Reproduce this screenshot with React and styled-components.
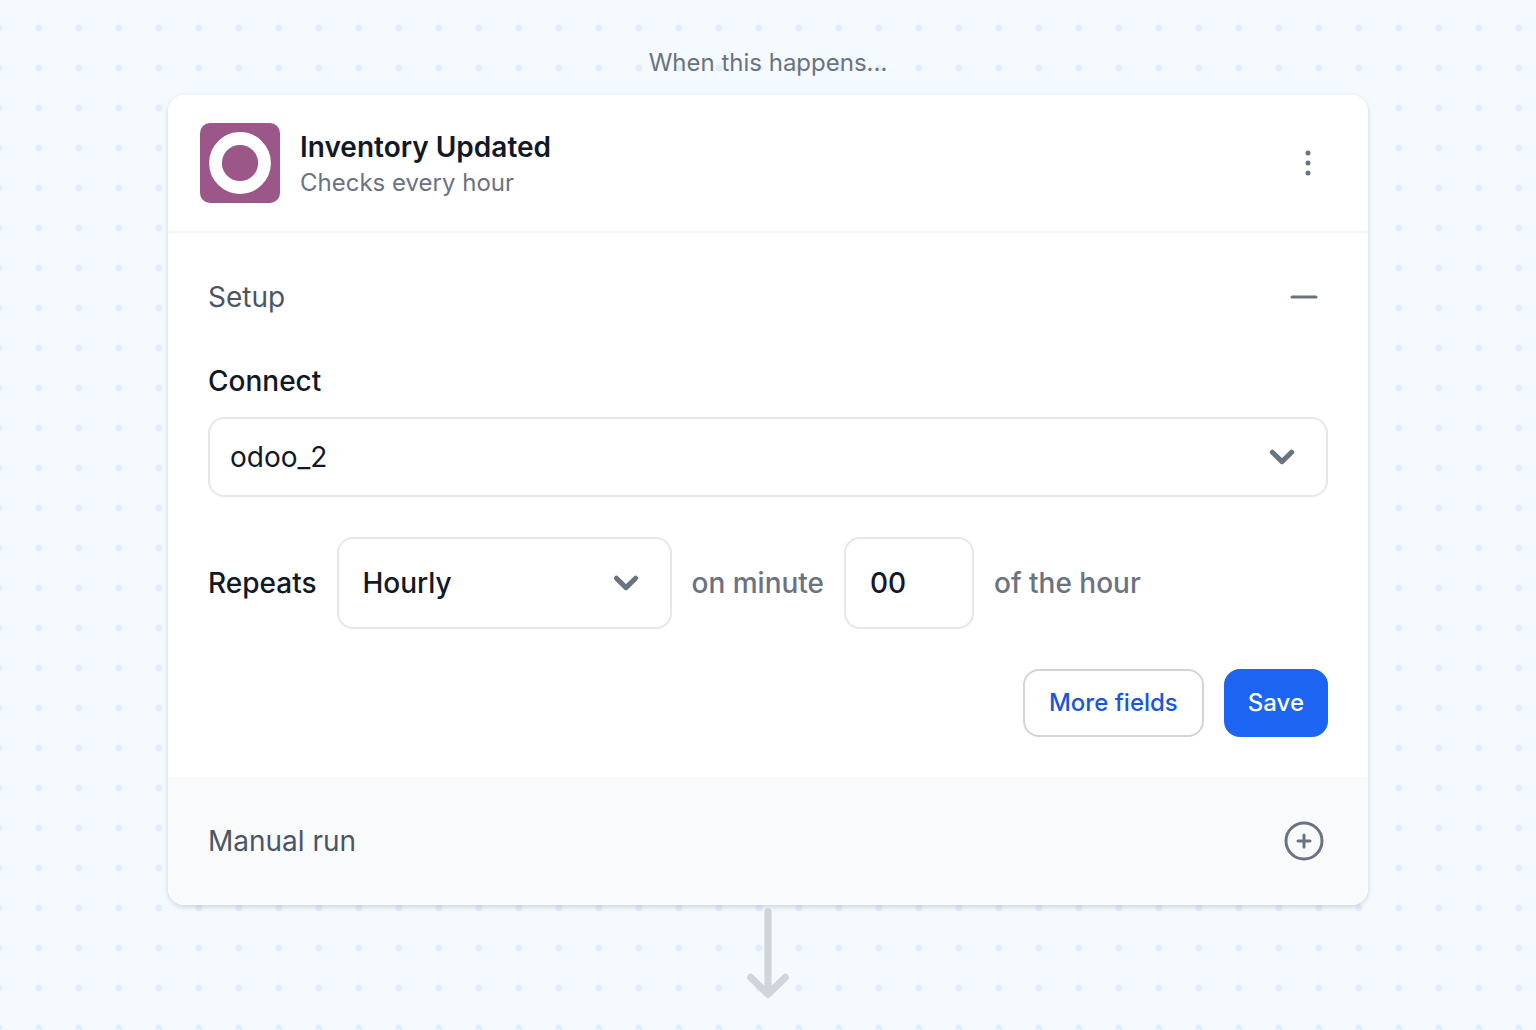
import { useState } from 'react';
import styled, { createGlobalStyle } from 'styled-components';

const GlobalStyle = createGlobalStyle`
  *, *::before, *::after {
    box-sizing: border-box;
  }

  body {
    margin: 0;
    font-family: Inter, 'Liberation Sans', sans-serif;
    font-size: 28px;
    line-height: 40px;
    color: #111827;
    background-color: #f5faff;
    background-image: radial-gradient(circle, #e0eefe 3px, transparent 4px);
    background-size: 40px 40px;
    background-position: 19px 8px;
  }

  button, input, select {
    margin: 0;
    font: inherit;
    color: inherit;
  }
`;

const Canvas = styled.main`
  display: flex;
  flex-direction: column;
  align-items: center;
  padding: 47px 32px 32px;
`;

const Caption = styled.p`
  margin: 0 0 16px;
  font-size: 24px;
  line-height: 32px;
  color: #6b7280;
`;

const Card = styled.section`
  width: 100%;
  max-width: 1200px;
  overflow: hidden;
  border-radius: 16px;
  background: #fff;
  box-shadow: 0 2px 6px rgba(0, 0, 0, 0.1), 0 2px 4px rgba(0, 0, 0, 0.06);
`;

const CardHeader = styled.header`
  display: flex;
  align-items: center;
  gap: 20px;
  padding: 28px 32px;
  border-bottom: 2px solid #f3f4f6;
`;

const Titles = styled.div`
  flex: 1;
`;

const Title = styled.h1`
  margin: 0;
  font-size: 28px;
  font-weight: 600;
  line-height: 40px;
`;

const Subtitle = styled.p`
  margin: 0;
  font-size: 24px;
  line-height: 32px;
  color: #6b7280;
`;

const MenuButton = styled.button`
  display: grid;
  place-items: center;
  width: 56px;
  height: 56px;
  padding: 0;
  border: 0;
  background: none;
  color: #6b7280;
  cursor: pointer;
`;

const SectionToggle = styled.button`
  display: flex;
  align-items: center;
  justify-content: space-between;
  width: 100%;
  height: 128px;
  padding: 0 40px;
  border: 0;
  background: ${({ $muted }) => ($muted ? '#f9fafb' : '#fff')};
  color: #4b5563;
  text-align: left;
  cursor: pointer;

  svg {
    color: #6b7280;
  }
`;

const Form = styled.form`
  display: flex;
  flex-direction: column;
  gap: 40px;
  padding: 0 40px 40px;
`;

const Field = styled.div`
  display: flex;
  flex-direction: column;
  gap: 16px;
`;

const Label = styled.label`
  font-weight: 500;
  color: ${({ $muted }) => ($muted ? '#6b7280' : '#111827')};
`;

const Row = styled.div`
  display: flex;
  flex-wrap: wrap;
  align-items: center;
  gap: 20px;
`;

const SelectBox = styled.div`
  display: grid;
  align-items: center;
  width: ${({ $width }) => $width || '100%'};

  select, svg {
    grid-area: 1 / 1;
  }

  svg {
    justify-self: end;
    margin-right: 32px;
    color: #6b7280;
    pointer-events: none;
  }
`;

const Select = styled.select`
  width: 100%;
  height: ${({ $large }) => ($large ? '92px' : '80px')};
  padding: 0 ${({ $large }) => ($large ? '24px' : '20px')};
  border: 2px solid #e5e7eb;
  border-radius: 16px;
  appearance: none;
  background: #fff;
  font-weight: ${({ $large }) => ($large ? 500 : 400)};
`;

const MinuteInput = styled.input`
  width: 130px;
  height: 92px;
  padding: 0 24px;
  border: 2px solid #e5e7eb;
  border-radius: 16px;
  background: #fff;
  font-weight: 500;
`;

const Actions = styled.div`
  display: flex;
  justify-content: flex-end;
  gap: 20px;
`;

const Button = styled.button`
  height: 68px;
  padding: 0 24px;
  border: ${({ $primary }) => ($primary ? '0' : '2px solid #d1d5db')};
  border-radius: 16px;
  background: ${({ $primary }) => ($primary ? '#1c64f2' : '#fff')};
  color: ${({ $primary }) => ($primary ? '#fff' : '#1a56db')};
  font-size: 24px;
  font-weight: 500;
  line-height: 32px;
  cursor: pointer;
`;

function Logo() {
  return (
    <svg width="80" height="80" viewBox="0 0 80 80" aria-hidden="true">
      <rect width="80" height="80" rx="10" fill="#9c5789" />
      <circle cx="40" cy="40" r="24.5" fill="none" stroke="#fff" strokeWidth="12.8" />
    </svg>
  );
}

function DotsIcon() {
  return (
    <svg width="40" height="40" viewBox="0 0 40 40" fill="currentColor" aria-hidden="true">
      <circle cx="20" cy="10" r="2.5" />
      <circle cx="20" cy="20" r="2.5" />
      <circle cx="20" cy="30" r="2.5" />
    </svg>
  );
}

function Chevron() {
  return (
    <svg width="28" height="28" viewBox="0 0 28 28" fill="none" aria-hidden="true">
      <path
        d="M4.4 9.2L14 18.6L23.6 9.2"
        stroke="currentColor"
        strokeWidth="5"
        strokeLinecap="round"
        strokeLinejoin="round"
      />
    </svg>
  );
}

function ToggleIcon({ open }) {
  return (
    <svg
      width="48"
      height="48"
      viewBox="0 0 24 24"
      fill="none"
      stroke="currentColor"
      strokeWidth="1.5"
      strokeLinecap="round"
      strokeLinejoin="round"
      aria-hidden="true"
    >
      <path d={open ? 'M18 12H6' : 'M12 9v6m3-3H9m12 0a9 9 0 1 1-18 0 9 9 0 0 1 18 0Z'} />
    </svg>
  );
}

function FlowArrow() {
  return (
    <svg width="48" height="93" viewBox="0 0 48 93" fill="none" aria-hidden="true">
      <path
        d="M24 6.5V89M6.6 72.4L24 89.2L41.4 72.4"
        stroke="#d1d5db"
        strokeWidth="7.2"
        strokeLinecap="round"
        strokeLinejoin="round"
      />
    </svg>
  );
}

export default function App() {
  const [setupOpen, setSetupOpen] = useState(true);
  const [minute, setMinute] = useState('00');

  return (
    <>
      <GlobalStyle />
      <Canvas>
        <Caption>When this happens...</Caption>
        <Card>
          <CardHeader>
            <Logo />
            <Titles>
              <Title>Inventory Updated</Title>
              <Subtitle>Checks every hour</Subtitle>
            </Titles>
            <MenuButton type="button" aria-label="More options">
              <DotsIcon />
            </MenuButton>
          </CardHeader>
          <SectionToggle
            type="button"
            aria-expanded={setupOpen}
            onClick={() => setSetupOpen(!setupOpen)}
          >
            Setup
            <ToggleIcon open={setupOpen} />
          </SectionToggle>
          {setupOpen && (
            <Form onSubmit={(event) => event.preventDefault()}>
              <Field>
                <Label htmlFor="connect">Connect</Label>
                <SelectBox>
                  <Select id="connect" defaultValue="odoo_2">
                    <option>odoo_2</option>
                  </Select>
                  <Chevron />
                </SelectBox>
              </Field>
              <Row>
                <Label htmlFor="repeats">Repeats</Label>
                <SelectBox $width="335px">
                  <Select id="repeats" $large defaultValue="Hourly">
                    <option>Hourly</option>
                  </Select>
                  <Chevron />
                </SelectBox>
                <Label htmlFor="minute" $muted>on minute</Label>
                <MinuteInput
                  id="minute"
                  type="text"
                  inputMode="numeric"
                  value={minute}
                  onChange={(event) => setMinute(event.target.value)}
                />
                <Label htmlFor="minute" $muted>of the hour</Label>
              </Row>
              <Actions>
                <Button type="button">More fields</Button>
                <Button type="submit" $primary>Save</Button>
              </Actions>
            </Form>
          )}
          <SectionToggle type="button" $muted aria-expanded={false}>
            Manual run
            <ToggleIcon />
          </SectionToggle>
        </Card>
        <FlowArrow />
      </Canvas>
    </>
  );
}
